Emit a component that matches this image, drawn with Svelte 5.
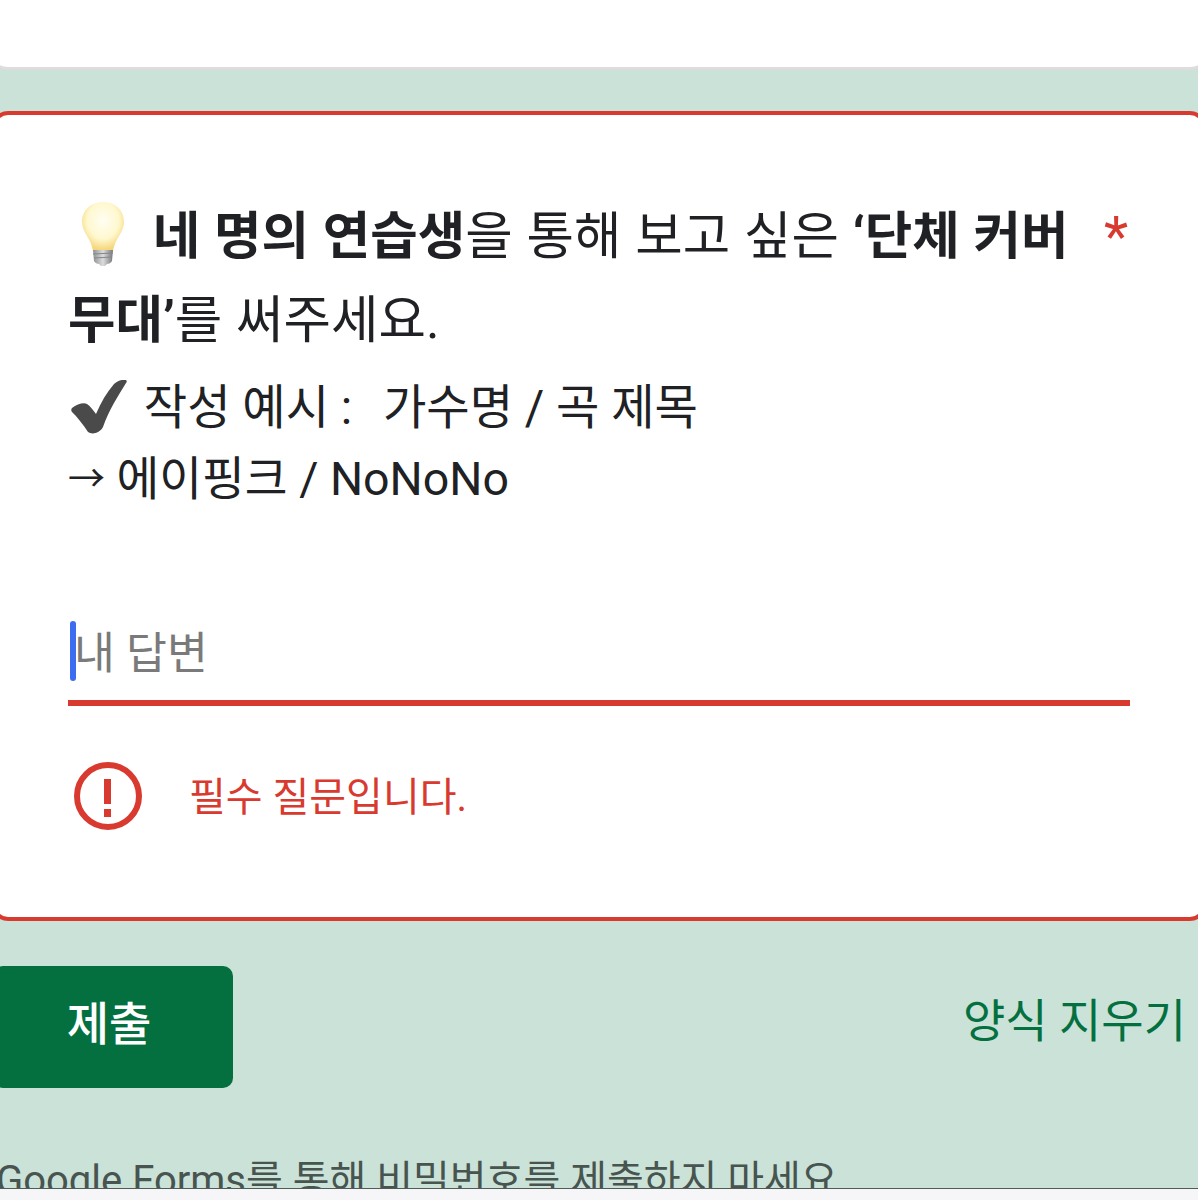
<script>
  let answer = '';
</script>

<div class="page">
  <main class="scroll">
    <div class="card top"></div>

    <section class="card question">
      <div class="title-row">
        <h2 class="title">
          <svg class="bulb" viewBox="0 0 48 68" aria-hidden="true">
            <defs>
              <radialGradient id="glass" cx="50%" cy="38%" r="60%">
                <stop offset="0%" stop-color="#fffef2" />
                <stop offset="62%" stop-color="#fff8cf" />
                <stop offset="100%" stop-color="#f5d67a" />
              </radialGradient>
              <linearGradient id="base" x1="0" y1="0" x2="1" y2="0">
                <stop offset="0%" stop-color="#8f9092" />
                <stop offset="50%" stop-color="#dcdcdc" />
                <stop offset="100%" stop-color="#77787a" />
              </linearGradient>
            </defs>
            <path d="M24 2C11 2 3 11 3 22c0 11 9 16 11 29h20c2-13 11-18 11-29C45 11 37 2 24 2z" fill="url(#glass)" />
            <path d="M14 50h20l-1 11c-1 2-3 3-5 3l-2 2h-4l-2-2c-2 0-4-1-5-3z" fill="url(#base)" />
            <path d="M14 54l20-1M15 58l18-1" stroke="#85868a" stroke-width="1" fill="none" />
          </svg>
          <strong>네 명의 연습생</strong>을 통해 보고 싶은 <strong>‘단체 커버 무대’</strong>를 써주세요.
        </h2>
        <span class="required">*</span>
      </div>

      <div class="desc">
        <p>
          <svg class="check" viewBox="0 0 56 54" aria-hidden="true">
            <path d="M1 28C6 24 13 22 16 24C19 26 22 30 25 34C30 22 36 12 43 4C46 1 52-1 55 0C56 1 56 2 55 3C47 16 38 30 32 47C29 53 21 55 17 52C12 44 6 37 1 32C0 31 0 29 1 28Z" fill="#4a4a4a" />
          </svg>
          <span class="after-check">작성 예시 <span class="colon">:</span> 가수명 / 곡 제목</span>
        </p>
        <p class="example"><span class="arrow">→</span> 에이핑크 / NoNoNo</p>
      </div>

      <label class="field">
        <span class="caret"></span>
        <input type="text" placeholder="내 답변" bind:value={answer} />
      </label>

      <div class="error">
        <svg class="err-icon" viewBox="0 0 68 68" aria-hidden="true">
          <circle cx="34" cy="34" r="31" fill="none" stroke="#d93a30" stroke-width="6" />
          <path d="M30 17h7v25h-7zM30 47h7v8h-7z" fill="#d93a30" />
        </svg>
        <span class="err-text">필수 질문입니다.</span>
      </div>
    </section>

    <div class="actions">
      <button class="submit" type="button">제출</button>
      <button class="clear" type="button">양식 지우기</button>
    </div>

    <p class="notice">Google Forms를 통해 비밀번호를 제출하지 마세요.</p>
  </main>
  <div class="bottom-bar"></div>
</div>

<style>
  :global(body) {
    margin: 0;
    background: #cbe2d8;
  }

  .page {
    width: 1198px;
    height: 1200px;
    display: flex;
    flex-direction: column;
    overflow: hidden;
    font-family: Roboto, "Noto Sans CJK KR", sans-serif;
    color: #202124;
  }

  .scroll {
    flex: 1;
    min-height: 0;
    overflow: hidden;
    background: #cbe2d8;
  }

  .bottom-bar {
    height: 11px;
    flex: none;
    background: #f6f6f8;
    border-top: 1px solid #4f5b57;
  }

  .card {
    background: #fff;
    box-sizing: border-box;
    margin: 0 -8px;
    border-radius: 16px;
  }

  .top {
    height: 70px;
    margin-top: 0;
    border-radius: 0 0 16px 16px;
    border-bottom: 3px solid #dfdcdc;
  }

  .question {
    height: 810px;
    margin-top: 41px;
    border: 4px solid #d93a30;
    padding: 80px 72px 0;
  }

  .title-row {
    display: flex;
    gap: 30px;
    width: 1054px;
  }

  .title {
    flex: 1;
    margin: 0;
    font-size: 51.6px;
    word-spacing: 1px;
    line-height: 84px;
    font-weight: 400;
    color: #202124;
  }

  .title strong {
    font-weight: 700;
  }

  .bulb {
    width: 48px;
    height: 68px;
    margin: 0 12px 0 11px;
    vertical-align: -14px;
  }

  .required {
    color: #d93a30;
    font-size: 56px;
    line-height: 84px;
    margin-right: -6px;
  }

  .desc {
    margin-top: 9px;
    font-size: 47.2px;
    line-height: 72px;
    color: #202124;
  }

  .desc p {
    margin: 0;
    white-space: nowrap;
  }

  .desc .example {
    font-size: 46.5px;
    line-height: 70px;
  }

  .check {
    width: 56px;
    height: 54px;
    margin-left: 3px;
    vertical-align: -10px;
  }

  .after-check {
    margin-left: 5px;
  }

  .colon {
    margin-right: 19px;
  }

  .arrow {
    font-size: 37px;
    vertical-align: 3px;
  }

  .field {
    position: relative;
    display: block;
    width: 1062px;
    margin-top: 106px;
    border-bottom: 6px solid #d93a30;
  }

  .field input {
    display: block;
    width: 100%;
    box-sizing: border-box;
    height: 79px;
    padding: 0 0 14px 6px;
    border: 0;
    outline: 0;
    background: transparent;
    font: inherit;
    font-size: 44.5px;
    color: #202124;
  }

  .field input::placeholder {
    color: #7a7a7a;
    opacity: 1;
  }

  .caret {
    position: absolute;
    left: 2px;
    top: 0;
    width: 6px;
    height: 60px;
    border-radius: 3px;
    background: #3c6cf0;
  }

  .error {
    display: flex;
    align-items: center;
    gap: 47px;
    margin-top: 56px;
    margin-left: 6px;
    font-size: 40px;
    color: #d93a30;
  }

  .err-text {
    padding-bottom: 4px;
  }

  .err-icon {
    width: 68px;
    height: 68px;
    flex: none;
  }

  .actions {
    display: flex;
    justify-content: space-between;
    align-items: flex-start;
    margin-top: 45px;
  }

  .submit {
    width: 240px;
    height: 122px;
    margin-left: -7px;
    padding: 0 8px 14px 0;
    border: 0;
    border-radius: 10px;
    background: #04703f;
    color: #fff;
    font: inherit;
    font-size: 46px;
    font-weight: 500;
  }

  .clear {
    margin-top: 22px;
    margin-right: 12px;
    padding: 0;
    border: 0;
    background: none;
    color: #04703f;
    font: inherit;
    font-size: 46px;
    line-height: 66px;
  }

  .notice {
    margin: 65px 0 0 -4px;
    font-size: 40px;
    line-height: 56px;
    color: #47544f;
    white-space: nowrap;
  }
</style>
